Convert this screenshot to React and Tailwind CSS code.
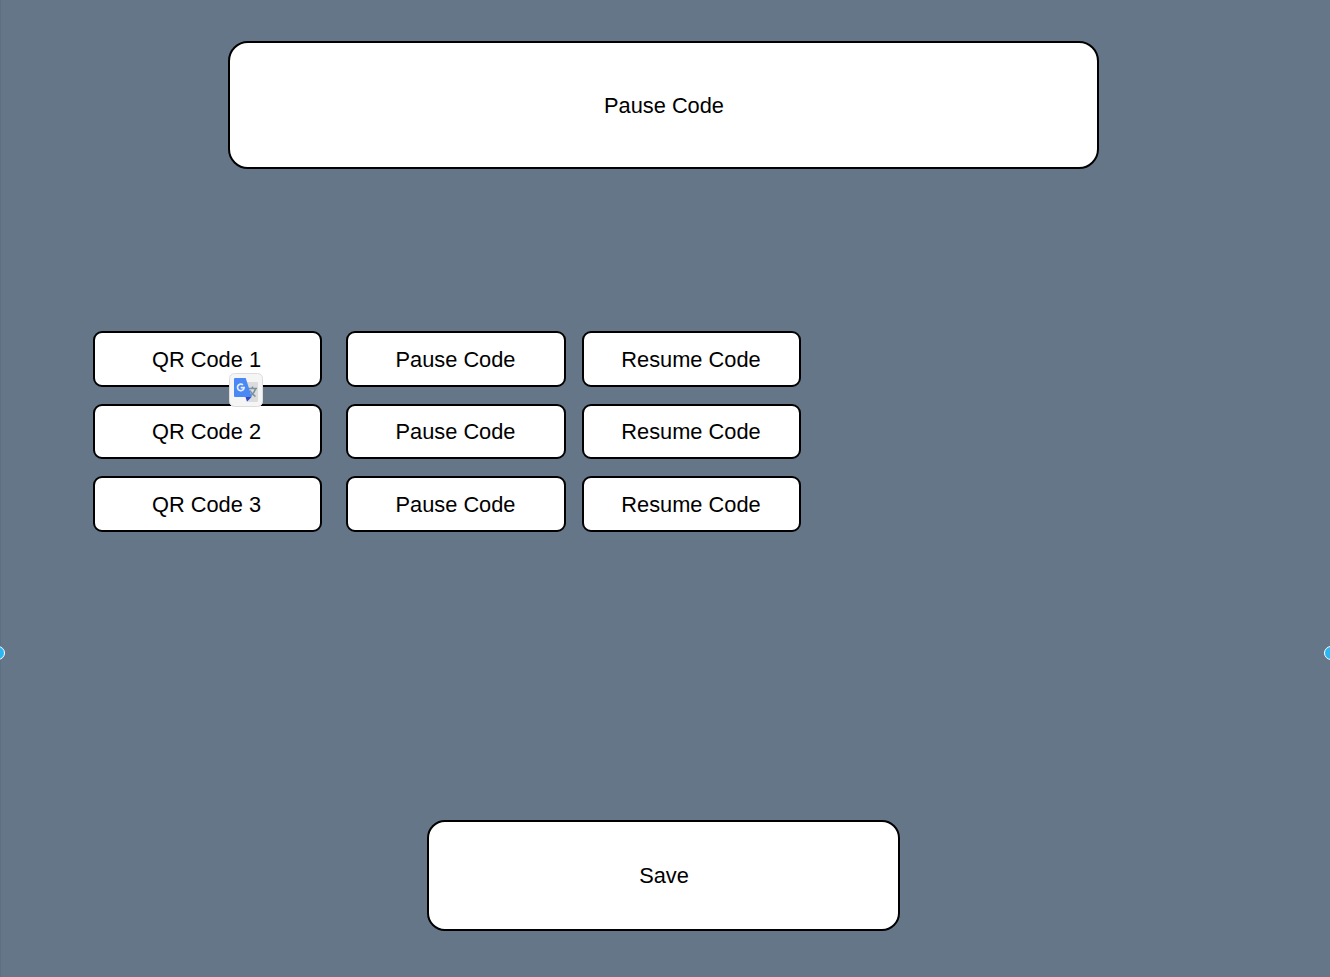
const base =
  "flex items-center justify-center border-2 border-black bg-white";

function TranslateBadge() {
  return (
    <svg
      className="absolute left-[136px] top-[42px] z-10 h-[34px] w-[34px]"
      viewBox="0 0 34 34"
      aria-hidden="true"
    >
      <rect x="0.5" y="0.5" width="33" height="33" rx="5" fill="#f5f5f5" stroke="#dcdcdc" />
      <path d="M16 9h12q1 0 1 1v18q0 1-1 1h-8.500z" fill="#dcdcdc" />
      <path d="M19.500 15.500h8.500M23.500 13.500v2M26.500 15.500c-.8 3.500-3 6-5.500 7.500M21 17.500c1.200 2.500 3 4.500 5.500 6" fill="none" stroke="#78909c" strokeWidth="1.500" />
      <path d="M16.500 24h6l-4.500 4.800z" fill="#3547bd" />
      <path d="M6 5H16.700l6.100 19H6Q5 24 5 23V6Q5 5 6 5z" fill="#4a89f5" />
      <path d="M14 11.900a3.300 3.300 0 1 0 1.100 2.700h-3.400" fill="none" stroke="#e6eefd" strokeWidth="1.700" />
    </svg>
  );
}

export default function App() {
  return (
    <main className="relative h-[977px] w-[1330px] overflow-hidden bg-[#647687] font-['Liberation_Sans',Arial,sans-serif] text-[21.8px] leading-none text-black">
      <div className="flex h-full flex-col border-l border-[#5d6f80]">
        <button className={`${base} ml-[227px] mt-[41px] h-[128px] w-[871px] rounded-[20px] pl-px pt-px`}>
          Pause Code
        </button>

        <section className="ml-[92px] mt-[162px] flex flex-col gap-[17px]">
          {[1, 2, 3].map((n) => (
            <div key={n} className="flex h-[55.500px]">
              <div className="relative mr-6">
                <button className={`${base} h-full w-[229px] rounded-[9px] pr-[2px] pt-[1.500px]`}>QR Code {n}</button>
                {n === 1 && <TranslateBadge />}
              </div>
              <button className={`${base} mr-4 h-full w-[220px] rounded-[9px] pr-px pt-[1.500px]`}>Pause Code</button>
              <button className={`${base} h-full w-[219px] rounded-[9px] pr-px pt-[1.500px]`}>Resume Code</button>
            </div>
          ))}
        </section>

        <button className={`${base} ml-[426px] mt-[288.500px] h-[111px] w-[473px] rounded-[18px] pl-px`}>
          Save
        </button>
      </div>

      <span className="absolute left-[-9px] top-[646px] h-[14px] w-[14px] rounded-full border-[1.500px] border-white bg-[#29b6f2]" />
      <span className="absolute left-[1324px] top-[646px] h-[14px] w-[14px] rounded-full border-[1.500px] border-white bg-[#29b6f2]" />
    </main>
  );
}
